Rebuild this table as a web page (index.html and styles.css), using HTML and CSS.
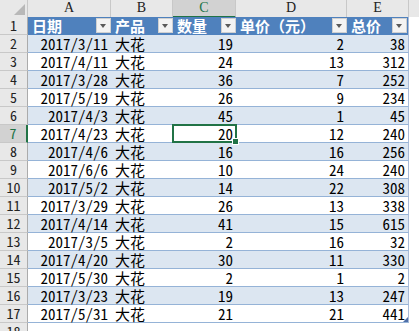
FILE: index.html
```html
<!DOCTYPE html>
<html lang="zh">
<head>
<meta charset="utf-8">
<link rel="stylesheet" href="styles.css">
</head>
<body>
<div class="sheet">
  <div class="row colhdr">
    <div class="corner"><svg width="28" height="17" viewBox="0 0 28 17"><polygon points="25,4 25,15 14,15" fill="#b8b8b8"/></svg></div>
    <div class="ch">A</div>
    <div class="ch">B</div>
    <div class="ch sel">C</div>
    <div class="ch">D</div>
    <div class="ch">E</div>
    <div class="ch last"></div>
  </div>
  <div class="row thead">
    <div class="rh">1</div>
    <div class="th">日期<span class="dd"></span></div>
    <div class="th">产品<span class="dd"></span></div>
    <div class="th">数量<span class="dd"></span></div>
    <div class="th">单价（元）<span class="dd"></span></div>
    <div class="th edge">总价<span class="dd"></span></div>
    <div class="out"></div>
  </div>
</div>
<div class="sheet body" id="rows"></div>
<script src="app.js"></script>
</body>
</html>
```
FILE: app.js
```js
var data = [
["2017/3/11",19,2,38],["2017/4/11",24,13,312],["2017/3/28",36,7,252],["2017/5/19",26,9,234],
["2017/4/3",45,1,45],["2017/4/23",20,12,240],["2017/4/6",16,16,256],["2017/6/6",10,24,240],
["2017/5/2",14,22,308],["2017/3/29",26,13,338],["2017/4/14",41,15,615],["2017/3/5",2,16,32],
["2017/4/20",30,11,330],["2017/5/30",2,1,2],["2017/3/23",19,13,247],["2017/5/31",21,21,441]
];
var host = document.getElementById('rows');
var html = '';
data.forEach(function (d, i) {
  var n = i + 2;
  var band = (n % 2 === 0) ? ' band' : '';
  var selRow = n === 7;
  var lastRow = n === 17;
  html += '<div class="row' + band + '">' +
    '<div class="rh' + (selRow ? ' sel' : '') + '">' + n + '</div>' +
    '<div class="td r">' + d[0] + '</div>' +
    '<div class="td l">大花</div>' +
    '<div class="td r' + (selRow ? ' active' : '') + '">' + d[1] + '</div>' +
    '<div class="td r">' + d[2] + '</div>' +
    '<div class="td r edge' + (lastRow ? ' grip' : '') + '">' + d[3] + '</div>' +
    '<div class="out"></div></div>';
});
html += '<div class="row"><div class="rh">18</div><div class="blank"></div></div>';
host.innerHTML = html;
```
FILE: styles.css
```css
html, body {
  margin: 0;
  padding: 0;
  background: #ffffff;
}
body {
  width: 419px;
  height: 331px;
  overflow: hidden;
  font-family: "Noto Sans Mono CJK SC", "Noto Sans CJK SC", monospace;
  font-size: 15px;
  color: #000;
}
.row {
  display: grid;
  grid-template-columns: 28px 83px 62px 63px 111px 62px 1fr;
  height: 18px;
}
.row > div {
  box-sizing: border-box;
  line-height: 17px;
  white-space: nowrap;
}
.colhdr {
  height: 17px;
}
.colhdr > div {
  background: #e8e8e8;
  border-right: 1px solid #c8c8c8;
  border-bottom: 1px solid #ababab;
  line-height: 16px;
}
.corner svg {
  display: block;
}
.ch {
  font-family: "Liberation Serif", serif;
  font-size: 14px;
  text-align: center;
  color: #222;
}
.ch.sel {
  background: #d2d2d2;
  color: #217346;
  border-bottom: 2px solid #217346;
}
.ch.last {
  border-right: none;
}
.rh {
  background: #e8e8e8;
  border-right: 1px solid #ababab;
  border-bottom: 1px solid #c8c8c8;
  text-align: center;
  font-size: 14px;
  color: #222;
}
.rh.sel {
  background: #d2d2d2;
  color: #217346;
  border-right: 2px solid #217346;
}
.thead .th {
  background: #4f81bd;
  color: #fff;
  font-family: "Noto Sans CJK SC", sans-serif;
  font-weight: 700;
  padding-left: 4px;
  position: relative;
  line-height: 18px;
}
.dd {
  position: absolute;
  right: 0;
  top: 1px;
  width: 15px;
  height: 15px;
  box-sizing: border-box;
  background: #f3f3f3;
  border: 1px solid #d0d0d0;
}
.dd::after {
  content: "";
  position: absolute;
  left: 3px;
  top: 5px;
  border-left: 3.5px solid transparent;
  border-right: 3.5px solid transparent;
  border-top: 4px solid #5a5a5a;
}
.td {
  border-bottom: 1px solid #95b3d7;
}
.band .td {
  background: #dce6f1;
}
.td.r {
  text-align: right;
  padding-right: 3px;
}
.td.l {
  text-align: left;
  padding-left: 4px;
}
.td.edge, .th.edge {
  border-right: 1px solid #a9bbd8;
}
.th.edge .dd {
  right: 1px;
}
.td.active {
  position: relative;
}
.td.active::before {
  content: "";
  position: absolute;
  left: -1px;
  top: -1px;
  right: -1px;
  bottom: -1px;
  border: 2px solid #217346;
}
.td.active::after {
  content: "";
  position: absolute;
  right: -3px;
  bottom: -3px;
  width: 5px;
  height: 5px;
  background: #217346;
  border: 1px solid #fff;
}
.td.grip {
  position: relative;
}
.td.grip::after {
  content: "";
  position: absolute;
  right: 0;
  bottom: 0;
  border-left: 5px solid transparent;
  border-bottom: 5px solid #4f6fa8;
}
.out, .blank {
  background: #fff;
}
.blank {
  grid-column: 2 / -1;
}
```
